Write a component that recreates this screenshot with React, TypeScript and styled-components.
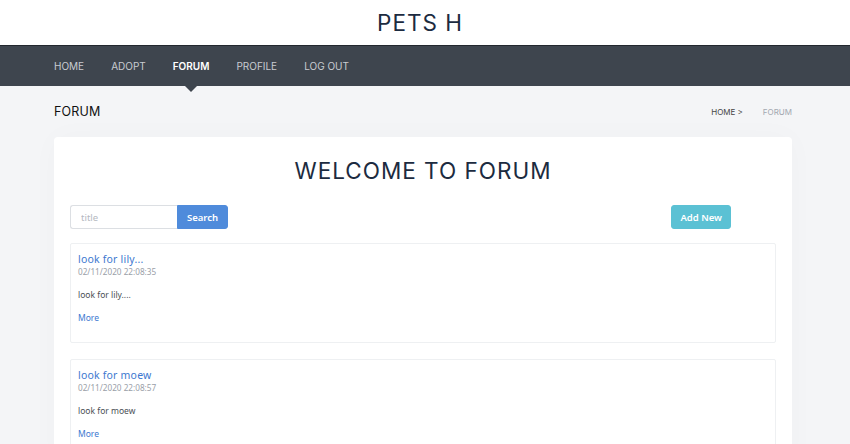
import React from "react";
import styled, { createGlobalStyle } from "styled-components";

const GlobalStyle = createGlobalStyle`
  html, body {
    margin: 0;
    padding: 0;
    background: #f4f5f7;
    font-family: "Open Sans", "Liberation Sans", sans-serif;
  }
  * { box-sizing: border-box; }
`;

const Header = styled.header`
  height: 45px;
  background: #fff;
  display: flex;
  align-items: center;
  justify-content: center;
`;

const SiteTitle = styled.h1`
  margin: 0 0 0 -10px;
  font-family: "Inter", "Liberation Sans", sans-serif;
  font-weight: 400;
  font-size: 22.5px;
  letter-spacing: 1px;
  color: #1c2b40;
`;

const NavBar = styled.nav`
  height: 41px;
  background: #3e454e;
  border-top: 1px solid #22272e;
  display: flex;
  align-items: center;
  padding-left: 54px;
  gap: 27px;
`;

const NavItem = styled.a<{ $active?: boolean }>`
  position: relative;
  font-family: "Inter", "Liberation Sans", sans-serif;
  font-size: 10px;
  font-weight: ${(p) => (p.$active ? 600 : 400)};
  letter-spacing: 0;
  color: ${(p) => (p.$active ? "#ffffff" : "#c9ccd1")};
  text-transform: uppercase;
  text-decoration: none;

  &::after {
    content: "";
    display: ${(p) => (p.$active ? "block" : "none")};
    position: absolute;
    left: 50%;
    margin-left: -6px;
    top: 26px;
    border-left: 6px solid transparent;
    border-right: 6px solid transparent;
    border-top: 6px solid #3e454e;
  }
`;

const Main = styled.main`
  padding: 0 58px 0 54px;
`;

const TitleBar = styled.div`
  height: 51px;
  display: flex;
  align-items: center;
  justify-content: space-between;
`;

const PageTitle = styled.h2`
  margin: 0;
  font-family: "Inter", "Liberation Sans", sans-serif;
  font-size: 12.5px;
  font-weight: 400;
  color: #111;
  letter-spacing: 0.2px;
`;

const Crumbs = styled.div`
  display: flex;
  gap: 20px;
  font-family: "Inter", "Liberation Sans", sans-serif;
  font-size: 8px;
`;

const Crumb = styled.span<{ $current?: boolean }>`
  color: ${(p) => (p.$current ? "#a3a8b0" : "#444")};
`;

const Card = styled.section`
  background: #fff;
  border-radius: 4px;
  padding: 20px 16px 16px;
  box-shadow: 0 0 30px rgba(0, 0, 0, 0.025);
`;

const Welcome = styled.h3`
  margin: 0 0 21px;
  text-align: center;
  font-family: "Inter", "Liberation Sans", sans-serif;
  font-weight: 400;
  font-size: 22.5px;
  letter-spacing: 1px;
  color: #1c2b40;
`;

const Toolbar = styled.div`
  display: flex;
  justify-content: space-between;
  align-items: center;
  padding-right: 45px;
  margin-bottom: 14px;
`;

const SearchGroup = styled.div`
  display: flex;
`;

const SearchInput = styled.input`
  width: 107px;
  height: 24px;
  border: 1px solid #dcdfe3;
  border-right: none;
  border-radius: 3px 0 0 3px;
  padding: 0 10px;
  font-family: "Noto Sans", "Liberation Sans", sans-serif;
  font-size: 9.5px;
  color: #333;
  outline: none;

  &::placeholder {
    color: #b5b9bf;
  }
`;

const Button = styled.button<{ $color: string; $joined?: boolean }>`
  height: 24px;
  border: 1px solid ${(p) => p.$color};
  background: ${(p) => p.$color};
  color: #fff;
  font-family: "Noto Sans", "Liberation Sans", sans-serif;
  font-size: 9.5px;
  font-weight: 600;
  padding: 0 ${(p) => (p.$joined ? 9 : 8)}px;
  border-radius: ${(p) => (p.$joined ? "0 3px 3px 0" : "3px")};
  cursor: pointer;
`;

const PostList = styled.div`
  display: flex;
  flex-direction: column;
  gap: 16px;
`;

const Post = styled.article`
  border: 1px solid #eef0f2;
  border-radius: 2px;
  padding: 8px 7px 19px;
  font-family: "Noto Sans", "Liberation Sans", sans-serif;
`;

const PostTitle = styled.a`
  display: block;
  font-size: 10.5px;
  line-height: 14px;
  color: #3d78d0;
  text-decoration: none;
  letter-spacing: 0.2px;
`;

const PostDate = styled.div`
  font-size: 8.2px;
  line-height: 11px;
  color: #9aa0a8;
`;

const PostBody = styled.p`
  margin: 12px 0 0;
  font-size: 8.5px;
  line-height: 11px;
  color: #4a4f55;
`;

const MoreLink = styled.a`
  display: block;
  margin-top: 12px;
  font-size: 8.5px;
  line-height: 11px;
  color: #3d78d0;
  text-decoration: none;
`;

const navLinks = ["Home", "Adopt", "Forum", "Profile", "Log out"];

const posts = [
  { title: "look for lily...", date: "02/11/2020 22:08:35", body: "look for lily...." },
  { title: "look for moew", date: "02/11/2020 22:08:57", body: "look for moew" },
];

const App: React.FC = () => {
  return (
    <>
      <GlobalStyle />
      <Header>
        <SiteTitle>PETS H</SiteTitle>
      </Header>
      <NavBar>
        {navLinks.map((link) => (
          <NavItem key={link} $active={link === "Forum"}>
            {link}
          </NavItem>
        ))}
      </NavBar>
      <Main>
        <TitleBar>
          <PageTitle>FORUM</PageTitle>
          <Crumbs>
            <Crumb>HOME &gt;</Crumb>
            <Crumb $current>FORUM</Crumb>
          </Crumbs>
        </TitleBar>
        <Card>
          <Welcome>WELCOME TO FORUM</Welcome>
          <Toolbar>
            <SearchGroup>
              <SearchInput placeholder="title" />
              <Button $color="#4f8bdb" $joined>
                Search
              </Button>
            </SearchGroup>
            <Button $color="#5bc1d4">Add New</Button>
          </Toolbar>
          <PostList>
            {posts.map((post) => (
              <Post key={post.date}>
                <PostTitle>{post.title}</PostTitle>
                <PostDate>{post.date}</PostDate>
                <PostBody>{post.body}</PostBody>
                <MoreLink>More</MoreLink>
              </Post>
            ))}
          </PostList>
        </Card>
      </Main>
    </>
  );
};

export default App;
